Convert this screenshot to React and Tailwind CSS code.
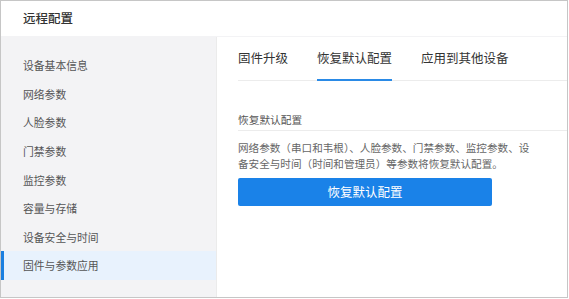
import React from "react";

const items = ["设备基本信息","网络参数","人脸参数","门禁参数","监控参数","容量与存储","设备安全与时间","固件与参数应用"];

export default function App() {
  return (
    <div className="w-[569px] h-[299px] bg-white" style={{fontFamily: '"Noto Sans CJK SC", "Noto Sans", sans-serif'}}>
      <div className="w-[568px] h-[298px] border border-[#c6c6c6] flex flex-col bg-[#f3f3f5] overflow-hidden">
        <div className="h-[35px] bg-white flex items-center pl-[22px] text-[12.5px] text-[#333] font-medium shrink-0">远程配置</div>
        <div className="flex flex-1 mt-[1px]">
          <div className="w-[215px] pt-[14px] flex flex-col">
            {items.map((t, i) => {
              const active = i === items.length - 1;
              return (
                <div key={t} className={`h-[28.6px] flex items-center text-[10.8px] text-[#555] ${active ? "bg-[#e8f2fd] pl-[19px] border-l-[3px] border-[#1a7fe0]" : "pl-[22px]"}`}>{t}</div>
              );
            })}
          </div>
          <div className="flex-1 bg-white border-l border-[#ebebeb] pl-[21px] flex flex-col">
            <div className="flex h-[44px] border-b border-[#ececec] text-[12.5px] text-[#333]">
              <div className="flex items-center mr-[29px]">固件升级</div>
              <div className="flex items-center mr-[29px] relative">
                恢复默认配置
                <div className="absolute left-0 right-0 bottom-[-1px] h-[2px] bg-[#2a8ae6]" />
              </div>
              <div className="flex items-center">应用到其他设备</div>
            </div>
            <div className="mt-[32px] text-[10.7px] text-[#555] h-[18px] border-b border-[#ececec] leading-[14px]">恢复默认配置</div>
            <div className="mt-[9px] text-[10.6px] text-[#666] leading-[16px] w-[296px]">网络参数（串口和韦根）、人脸参数、门禁参数、监控参数、设备安全与时间（时间和管理员）等参数将恢复默认配置。</div>
            <button className="mt-[6px] w-[254px] h-[28px] bg-[#1a82e8] rounded-[2px] text-white text-[12.5px] flex items-center justify-center">恢复默认配置</button>
          </div>
        </div>
      </div>
    </div>
  );
}
